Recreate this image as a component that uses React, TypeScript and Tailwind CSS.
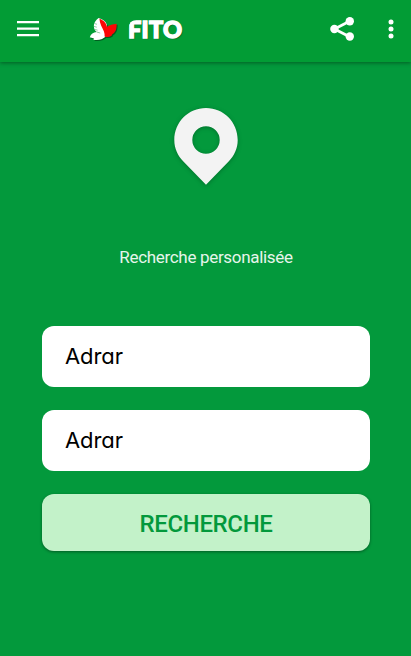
import { useState } from "react";

const wilayas = ["Adrar", "Chlef", "Laghouat", "Batna", "Alger", "Oran"];

const MenuIcon = () => (
  <svg className="block h-[16px] w-[22px]" viewBox="0 0 22 16" fill="#fff">
    <path d="M0 0h22v2.2H0zM0 6.4h22v2.3H0zM0 13h22v2.2H0z" />
  </svg>
);

const BirdLogo = () => (
  <svg
    className="block h-[24px] w-[30px] drop-shadow-[1px_1px_0.5px_rgba(0,0,0,0.4)]"
    viewBox="0 0 30 24"
  >
    <path
      d="M9.6 0.9C13 2 16.5 3.8 17.8 7.2L17.5 18.5C14.5 22.6 9 23.6 4.4 22.7L5 21.6 0.8 20.2C1.8 17 4.4 15.4 7.6 15C3.2 10.8 4.3 4.6 9.6 0.9Z"
      fill="#fff"
    />
    <path
      d="M5.4 6.5l2.6 0.8M5 9.4l2.8 0.8M5.8 12.4l2.8 0.8M7.6 15l3.6 1"
      stroke="#4cae68"
      strokeWidth="0.6"
    />
    <path
      d="M10.4 1.7C14 3.1 17.2 5.2 17.9 9.8C20.4 7.9 23.6 7.2 27.6 6.7C27.8 12 26.7 15 23.2 17.2L22.5 18.7C20.3 20.2 17.8 20.4 15.6 19.4C16 16 14.6 13.4 12.2 8.7C11.2 6.5 10.6 4.1 10.4 1.7Z"
      fill="#fb0505"
    />
  </svg>
);

const ShareIcon = () => (
  <svg className="block h-[24px] w-[25px]" viewBox="0 0 25 24" fill="#fff">
    <path d="M20 4L4.5 12L20 20" fill="none" stroke="#fff" strokeWidth="2.8" />
    <circle cx="4.4" cy="12" r="4.2" />
    <circle cx="19.8" cy="4.3" r="4.2" />
    <circle cx="19.8" cy="19.5" r="4.2" />
  </svg>
);

const MoreIcon = () => (
  <svg className="block h-[20px] w-[6px]" viewBox="0 0 6 20" fill="#fff">
    <circle cx="3" cy="3" r="2.5" />
    <circle cx="3" cy="10" r="2.5" />
    <circle cx="3" cy="17" r="2.5" />
  </svg>
);

const PinIcon = () => (
  <svg
    className="block h-[77px] w-[64px] drop-shadow-[0_1px_2px_rgba(0,0,0,0.25)]"
    viewBox="0 0 64 77"
  >
    <path
      fillRule="evenodd"
      fill="#f3f3f3"
      d="M32 0C49.7 0 63.7 14.2 63.7 32C63.7 40.5 60.2 47.8 54.6 53.5L32 76.8L9.4 53.5C3.8 47.8 0.3 40.5 0.3 32C0.3 14.2 14.3 0 32 0ZM32 18.3A13.7 13.7 0 1 0 32 45.7A13.7 13.7 0 1 0 32 18.3Z"
    />
  </svg>
);

type SelectProps = {
  label: string;
  value: string;
  onChange: (value: string) => void;
};

function PlaceSelect({ label, value, onChange }: SelectProps) {
  return (
    <select
      aria-label={label}
      value={value}
      onChange={(e) => onChange(e.target.value)}
      className="block h-[61px] w-full appearance-none rounded-xl bg-white px-[23px] font-['Inter',sans-serif] text-[22px] tracking-[-0.1px] text-black [font-feature-settings:'cv11']"
    >
      {wilayas.map((wilaya) => (
        <option key={wilaya}>{wilaya}</option>
      ))}
    </select>
  );
}

export default function App() {
  const [from, setFrom] = useState<string>("Adrar");
  const [to, setTo] = useState<string>("Adrar");

  return (
    <div className="flex h-screen flex-col overflow-hidden bg-[#03993c] font-['Roboto',sans-serif]">
      <header className="z-10 flex h-[62px] shrink-0 items-start bg-[#029c35] pr-[17px] pl-[17px] shadow-[0_1px_4px_rgba(0,0,0,0.4)]">
        <button aria-label="Menu" className="mt-[21px]">
          <MenuIcon />
        </button>
        <div className="mt-[17px] ml-[50px] flex">
          <BirdLogo />
          {/* the wordmark's F has a rounded shoulder */}
          <span className="ml-[9px] font-['Lato',sans-serif] text-[23.5px] leading-[25px] font-black tracking-[0.3px] whitespace-nowrap text-white [text-shadow:1px_1px_1px_rgba(0,0,0,0.5)] [-webkit-text-stroke:1.4px_white]">
            <span className="inline-block [clip-path:inset(3px_-3px_-3px_0.5px_round_8px_0_0_0)]">F</span>ITO
          </span>
        </div>
        <button aria-label="Share" className="mt-[17px] ml-auto">
          <ShareIcon />
        </button>
        <button aria-label="More" className="mt-[19px] ml-[33px]">
          <MoreIcon />
        </button>
      </header>
      <main className="flex flex-col pt-[46px] pr-[41px] pl-[42px]">
        <div className="flex justify-center">
          <PinIcon />
        </div>
        <p className="mt-[60px] text-center text-[17px] leading-6 tracking-[-0.32px] text-[#e6f5eb]">
          Recherche personalisée
        </p>
        <div className="mt-[57px] flex flex-col gap-[23px]">
          <PlaceSelect label="Départ" value={from} onChange={setFrom} />
          <PlaceSelect label="Arrivée" value={to} onChange={setTo} />
          <button className="h-[57px] w-full rounded-xl bg-[#c3f2c9] pt-[2px] text-[24px] font-medium tracking-[-0.35px] text-[#03993c] shadow-[0_1px_3px_rgba(0,0,0,0.4)]">
            RECHERCHE
          </button>
        </div>
      </main>
    </div>
  );
}
